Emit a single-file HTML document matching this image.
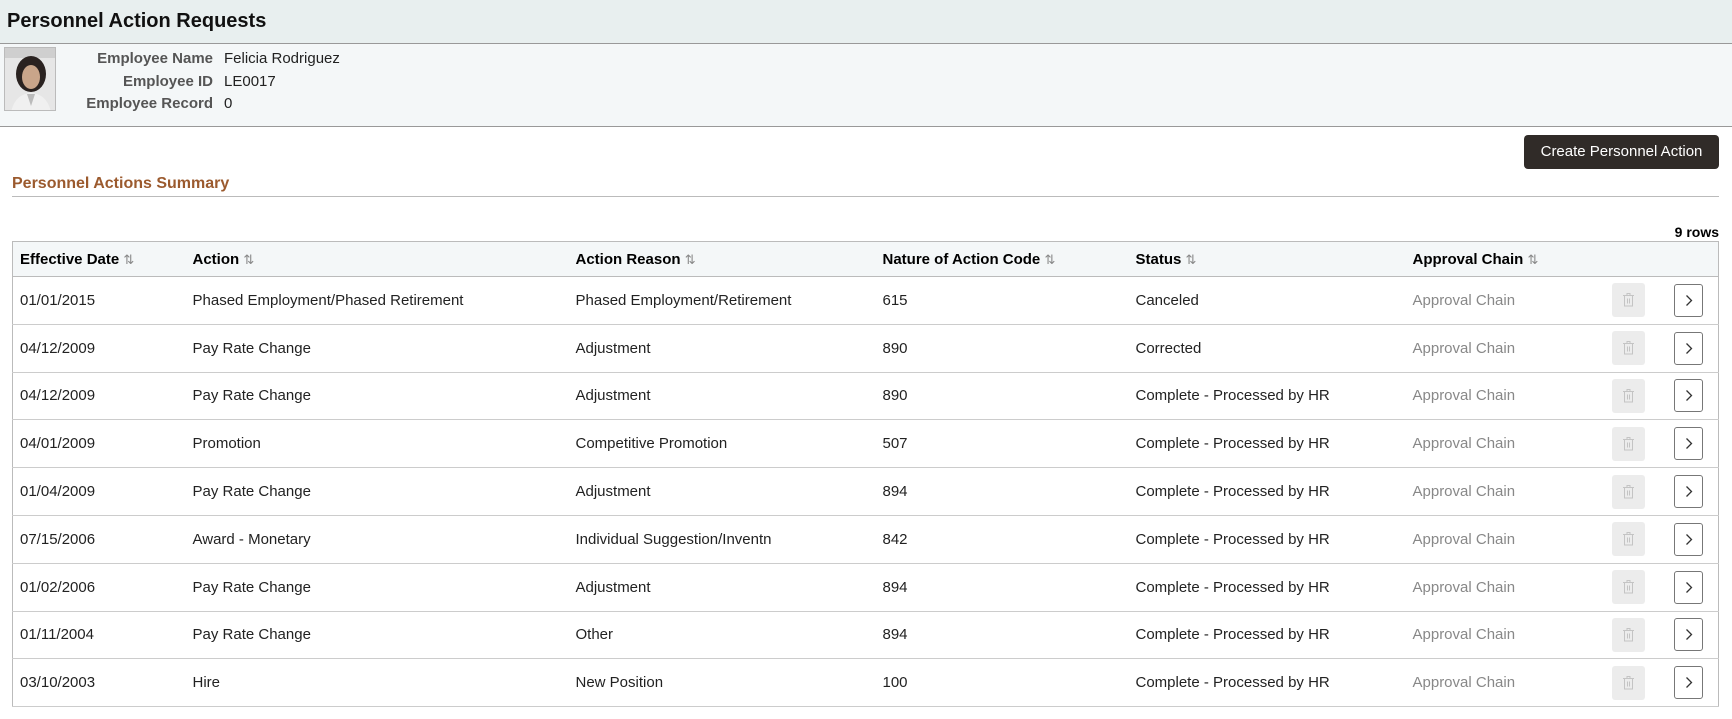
<!DOCTYPE html>
<html><head><style>
*{box-sizing:border-box;margin:0;padding:0}
body{width:1732px;height:719px;overflow:hidden;background:#fff;font-family:"Liberation Sans",Arial,sans-serif;color:#000;position:relative}
.hdr{position:absolute;left:0;top:0;width:1732px;height:44px;background:#e8efef;border-bottom:1px solid #999}
.hdr h1{position:absolute;left:7px;top:10px;font-size:20px;font-weight:bold;color:#111}
.emp{position:absolute;left:0;top:44px;width:1732px;height:83px;background:#f4f7f8;border-bottom:1px solid #999}
.photo{position:absolute;left:4px;top:3px;width:52px;height:64px;border:1px solid #bbb;background:#ddd;overflow:hidden}
.lbl{position:absolute;right:1519px;font-size:15px;font-weight:bold;color:#555;text-align:right;white-space:nowrap}
.val{position:absolute;left:224px;font-size:15px;color:#222}
.btn{position:absolute;left:1524px;top:135px;width:195px;height:34px;background:#302b28;border-radius:4px;color:#fff;font-size:15px;text-align:center;line-height:34px}
.sum{position:absolute;left:12px;top:175px;font-size:16px;font-weight:bold;color:#9b5a2e}
.sline{position:absolute;left:12px;top:196px;width:1707px;height:1px;background:#bbb}
.rows{position:absolute;right:13px;top:224px;font-size:14px;font-weight:bold}
table{position:absolute;left:12px;top:241px;width:1707px;border-collapse:collapse;border:1px solid #bbb;font-size:15px}
th{background:#f4f7f8;text-align:left;font-weight:bold;height:35px;border-bottom:1px solid #bbb;padding-left:7px;white-space:nowrap}
td{height:47.8px;border-bottom:1px solid #ccc;padding-left:7px;color:#222;white-space:nowrap}
.s{color:#888;font-weight:normal;font-size:13px}
.ap{color:#888}
.tr{display:inline-block;width:33px;height:34px;background:#ececec;border-radius:3px;vertical-align:middle}
.ch{display:inline-block;width:29px;height:33px;border:1px solid #777;border-radius:3px;vertical-align:middle}
</style></head><body>
<div class="hdr"><h1>Personnel Action Requests</h1></div>
<div class="emp">
<div class="photo"><svg width="52" height="64"><rect width="52" height="64" fill="#e6e6e6"/><rect y="0" width="52" height="10" fill="#cfcfcf"/><ellipse cx="26" cy="26" rx="15" ry="18" fill="#2a2220"/><ellipse cx="26" cy="29" rx="9" ry="12" fill="#c9a58a"/><path d="M6 64 Q10 46 26 45 Q42 46 46 64Z" fill="#f0f0f0"/><path d="M22 46 L26 58 L30 46" fill="#bbb"/></svg></div>
<div class="lbl" style="top:6px">Employee Name</div><div class="val" style="top:6px">Felicia Rodriguez</div>
<div class="lbl" style="top:29px">Employee ID</div><div class="val" style="top:29px">LE0017</div>
<div class="lbl" style="top:51px">Employee Record</div><div class="val" style="top:51px">0</div>
</div>
<div class="btn">Create Personnel Action</div>
<div class="sum">Personnel Actions Summary</div>
<div class="sline"></div>
<div class="rows">9 rows</div>
<table>
<colgroup><col style="width:173px"><col style="width:383px"><col style="width:307px"><col style="width:253px"><col style="width:277px"><col style="width:199px"><col style="width:62px"><col></colgroup>
<tr><th>Effective Date <span class="s">⇅</span></th><th>Action <span class="s">⇅</span></th><th>Action Reason <span class="s">⇅</span></th><th>Nature of Action Code <span class="s">⇅</span></th><th>Status <span class="s">⇅</span></th><th>Approval Chain <span class="s">⇅</span></th><th></th><th></th></tr>
<tr><td>01/01/2015</td><td>Phased Employment/Phased Retirement</td><td>Phased Employment/Retirement</td><td>615</td><td>Canceled</td><td class="ap">Approval Chain</td><td><span class="tr"><svg width="33" height="34"><path d="M11 12.5h11M15 12.5v-2h3v2M12.5 13v10h8v-10M15.5 15.5v5M17.5 15.5v5" stroke="#c4c4c4" fill="none"/></svg></span></td><td><span class="ch"><svg width="27" height="31"><path d="M11.5 10.5l5 5-5 5" stroke="#333" stroke-width="1.3" fill="none"/></svg></span></td></tr>
<tr><td>04/12/2009</td><td>Pay Rate Change</td><td>Adjustment</td><td>890</td><td>Corrected</td><td class="ap">Approval Chain</td><td><span class="tr"><svg width="33" height="34"><path d="M11 12.5h11M15 12.5v-2h3v2M12.5 13v10h8v-10M15.5 15.5v5M17.5 15.5v5" stroke="#c4c4c4" fill="none"/></svg></span></td><td><span class="ch"><svg width="27" height="31"><path d="M11.5 10.5l5 5-5 5" stroke="#333" stroke-width="1.3" fill="none"/></svg></span></td></tr>
<tr><td>04/12/2009</td><td>Pay Rate Change</td><td>Adjustment</td><td>890</td><td>Complete - Processed by HR</td><td class="ap">Approval Chain</td><td><span class="tr"><svg width="33" height="34"><path d="M11 12.5h11M15 12.5v-2h3v2M12.5 13v10h8v-10M15.5 15.5v5M17.5 15.5v5" stroke="#c4c4c4" fill="none"/></svg></span></td><td><span class="ch"><svg width="27" height="31"><path d="M11.5 10.5l5 5-5 5" stroke="#333" stroke-width="1.3" fill="none"/></svg></span></td></tr>
<tr><td>04/01/2009</td><td>Promotion</td><td>Competitive Promotion</td><td>507</td><td>Complete - Processed by HR</td><td class="ap">Approval Chain</td><td><span class="tr"><svg width="33" height="34"><path d="M11 12.5h11M15 12.5v-2h3v2M12.5 13v10h8v-10M15.5 15.5v5M17.5 15.5v5" stroke="#c4c4c4" fill="none"/></svg></span></td><td><span class="ch"><svg width="27" height="31"><path d="M11.5 10.5l5 5-5 5" stroke="#333" stroke-width="1.3" fill="none"/></svg></span></td></tr>
<tr><td>01/04/2009</td><td>Pay Rate Change</td><td>Adjustment</td><td>894</td><td>Complete - Processed by HR</td><td class="ap">Approval Chain</td><td><span class="tr"><svg width="33" height="34"><path d="M11 12.5h11M15 12.5v-2h3v2M12.5 13v10h8v-10M15.5 15.5v5M17.5 15.5v5" stroke="#c4c4c4" fill="none"/></svg></span></td><td><span class="ch"><svg width="27" height="31"><path d="M11.5 10.5l5 5-5 5" stroke="#333" stroke-width="1.3" fill="none"/></svg></span></td></tr>
<tr><td>07/15/2006</td><td>Award - Monetary</td><td>Individual Suggestion/Inventn</td><td>842</td><td>Complete - Processed by HR</td><td class="ap">Approval Chain</td><td><span class="tr"><svg width="33" height="34"><path d="M11 12.5h11M15 12.5v-2h3v2M12.5 13v10h8v-10M15.5 15.5v5M17.5 15.5v5" stroke="#c4c4c4" fill="none"/></svg></span></td><td><span class="ch"><svg width="27" height="31"><path d="M11.5 10.5l5 5-5 5" stroke="#333" stroke-width="1.3" fill="none"/></svg></span></td></tr>
<tr><td>01/02/2006</td><td>Pay Rate Change</td><td>Adjustment</td><td>894</td><td>Complete - Processed by HR</td><td class="ap">Approval Chain</td><td><span class="tr"><svg width="33" height="34"><path d="M11 12.5h11M15 12.5v-2h3v2M12.5 13v10h8v-10M15.5 15.5v5M17.5 15.5v5" stroke="#c4c4c4" fill="none"/></svg></span></td><td><span class="ch"><svg width="27" height="31"><path d="M11.5 10.5l5 5-5 5" stroke="#333" stroke-width="1.3" fill="none"/></svg></span></td></tr>
<tr><td>01/11/2004</td><td>Pay Rate Change</td><td>Other</td><td>894</td><td>Complete - Processed by HR</td><td class="ap">Approval Chain</td><td><span class="tr"><svg width="33" height="34"><path d="M11 12.5h11M15 12.5v-2h3v2M12.5 13v10h8v-10M15.5 15.5v5M17.5 15.5v5" stroke="#c4c4c4" fill="none"/></svg></span></td><td><span class="ch"><svg width="27" height="31"><path d="M11.5 10.5l5 5-5 5" stroke="#333" stroke-width="1.3" fill="none"/></svg></span></td></tr>
<tr><td>03/10/2003</td><td>Hire</td><td>New Position</td><td>100</td><td>Complete - Processed by HR</td><td class="ap">Approval Chain</td><td><span class="tr"><svg width="33" height="34"><path d="M11 12.5h11M15 12.5v-2h3v2M12.5 13v10h8v-10M15.5 15.5v5M17.5 15.5v5" stroke="#c4c4c4" fill="none"/></svg></span></td><td><span class="ch"><svg width="27" height="31"><path d="M11.5 10.5l5 5-5 5" stroke="#333" stroke-width="1.3" fill="none"/></svg></span></td></tr>
</table>
</body></html>
